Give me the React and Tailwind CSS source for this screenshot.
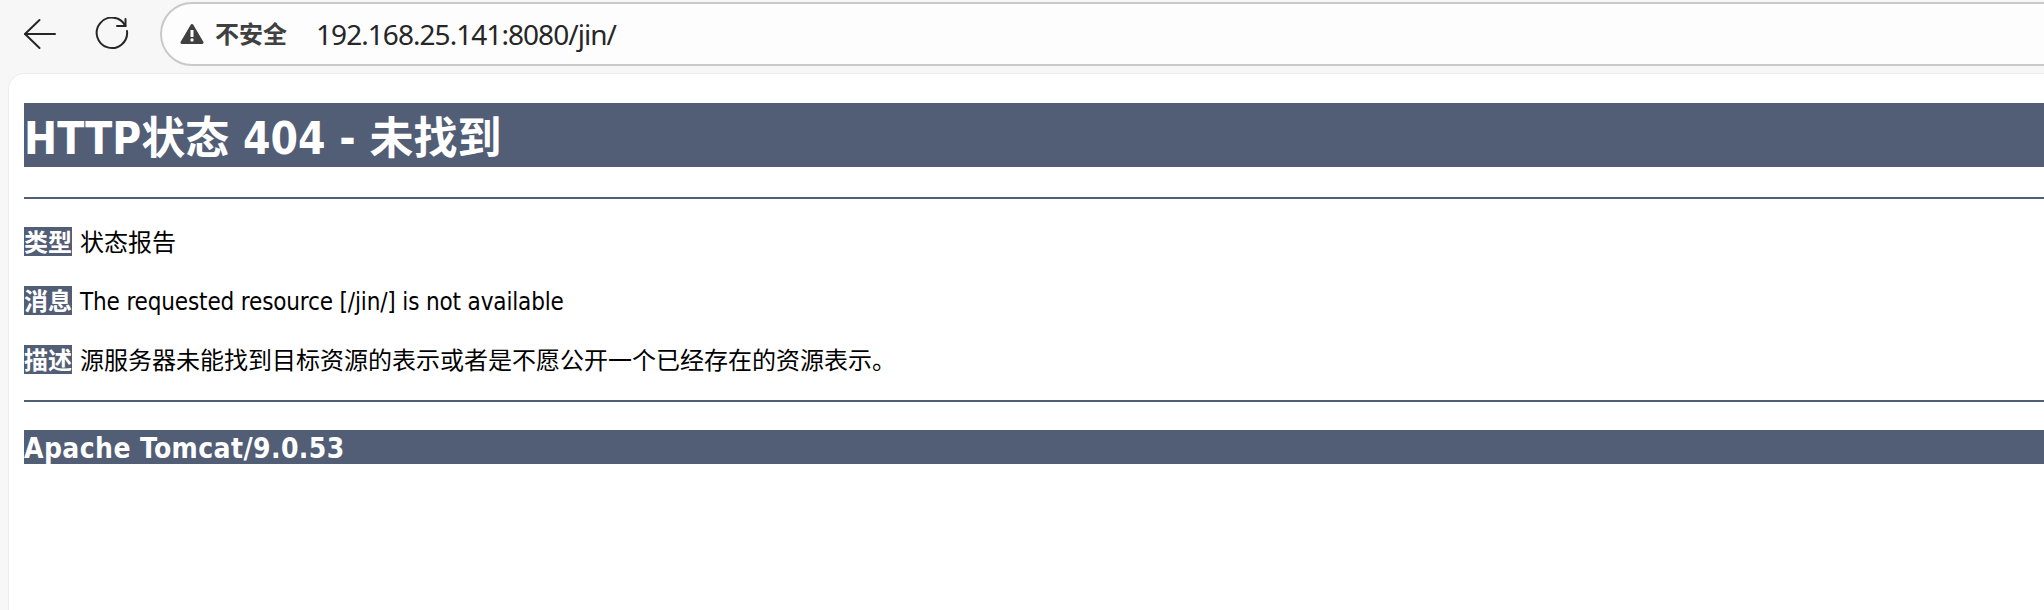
import React from 'react';

const pageFont = 'font-["DejaVu_Sans_Condensed","Noto_Sans_CJK_SC",sans-serif]';

function BackIcon() {
  return (
    <svg width="34" height="32" viewBox="0 0 34 32" fill="none" stroke="#262626" strokeWidth="2" strokeLinecap="round" strokeLinejoin="round">
      <path d="M16.5 2 2 16l14.5 14" />
      <path d="M2 16h30" />
    </svg>
  );
}

function ReloadIcon() {
  return (
    <svg width="34" height="34" viewBox="0 0 34 34" fill="none" stroke="#262626" strokeWidth="2" strokeLinecap="round" strokeLinejoin="round">
      <path d="M32 14A15.2 15.2 0 1 1 30.5 9" />
      <path d="M30.5 2V9H22" />
    </svg>
  );
}

function WarnIcon() {
  return (
    <svg width="24" height="22" viewBox="0 0 24 22">
      <path d="M12 2.5 22 19.5H2z" fill="#404040" stroke="#404040" strokeWidth="3" strokeLinejoin="round" />
      <rect x="10.5" y="7" width="3" height="7" rx="0.5" fill="#fdfdfd" />
      <circle cx="12" cy="17" r="1.7" fill="#fdfdfd" />
    </svg>
  );
}

function Row({ tag, className = '', children }) {
  return (
    <div className="flex gap-2 h-[29px] text-[24px] leading-[33px] text-black">
      <span className="h-[29px] bg-[#525d76] text-white font-bold">{tag}</span>
      <span className={className}>{children}</span>
    </div>
  );
}

export default function App() {
  return (
    <div className={`h-[610px] w-[2044px] overflow-hidden bg-[#f7f7f7] ${pageFont}`}>
      <div className='h-[73px] flex items-start pt-[2px] font-["Noto_Sans","Noto_Sans_CJK_SC",sans-serif]'>
        <div className="ml-[23px] mt-[16px] w-[34px]"><BackIcon /></div>
        <div className="ml-[38px] mt-[15px] w-[34px]"><ReloadIcon /></div>
        <div className="ml-[31px] h-[64px] flex-1 -mr-[60px] flex items-center rounded-l-full border-2 border-[#c9c9c9] bg-[#fdfdfd]">
          <div className="ml-[18px]"><WarnIcon /></div>
          <span className="ml-[11px] w-[72px] text-[24px] font-bold text-[#404040] whitespace-nowrap">不安全</span>
          <span className="ml-[29px] text-[28px] tracking-[-0.95px] text-[#262626]">192.168.25.141:8080/jin/</span>
        </div>
      </div>
      <div className="ml-2 h-[537px] rounded-tl-[16px] border-l border-t border-[#ececec] bg-white pl-[15px] pt-[29px]">
        <h1 className="h-[64px] bg-[#525d76] text-[44px] leading-[71px] font-bold text-white">HTTP状态 404 - 未找到</h1>
        <div className="mt-[30px] h-[2px] bg-[#525d76]" />
        <div className="mt-[28px] flex flex-col gap-[30px]">
          <Row tag="类型">状态报告</Row>
          <Row tag="消息" className="tracking-[-0.15px]">The requested resource [/jin/] is not available</Row>
          <Row tag="描述">源服务器未能找到目标资源的表示或者是不愿公开一个已经存在的资源表示。</Row>
        </div>
        <div className="mt-[26px] h-[2px] bg-[#525d76]" />
        <h3 className="mt-[28px] h-[34px] bg-[#525d76] text-[28px] leading-[38px] tracking-[0.4px] font-bold text-white">Apache Tomcat/9.0.53</h3>
      </div>
    </div>
  );
}
